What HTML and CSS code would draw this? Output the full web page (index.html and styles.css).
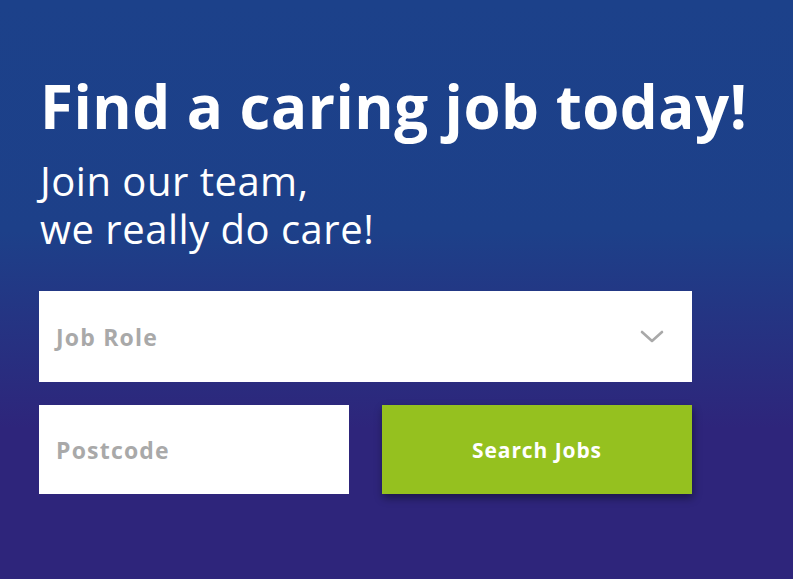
FILE: index.html
```html
<!DOCTYPE html>
<html lang="en">
<head>
<meta charset="utf-8">
<title>Find a caring job today!</title>
<link rel="stylesheet" href="styles.css">
</head>
<body>
<main class="hero">
  <h1 class="hero-title">Find a caring job today!</h1>
  <p class="hero-sub">Join our team,<br>we really do care!</p>
  <form class="search">
    <div class="field field-select">
      <span class="field-label">Job Role</span>
      <svg class="chevron" width="24" height="14" viewBox="0 0 24 14" aria-hidden="true">
        <path d="M2 2 L12 11 L22 2" fill="none" stroke="#a9a9a9" stroke-width="2.6" stroke-linecap="round" stroke-linejoin="round"/>
      </svg>
    </div>
    <div class="search-row">
      <input class="field field-input" type="text" placeholder="Postcode">
      <button class="btn" type="button">Search Jobs</button>
    </div>
  </form>
</main>
</body>
</html>
```

FILE: styles.css
```css
* {
  box-sizing: border-box;
}

html, body {
  margin: 0;
  height: 100%;
}

body {
  background: linear-gradient(180deg, #1c418a 0%, #1d4089 40%, #2e257b 74%, #2e257b 100%);
  font-family: "Open Sans", "Liberation Sans", sans-serif;
  color: #ffffff;
  overflow: hidden;
}

.hero {
  padding: 70px 0 0 40px;
}

.hero-title {
  margin: 0;
  font-size: 60px;
  line-height: 72px;
  font-weight: 700;
  letter-spacing: 0.5px;
}

.hero-sub {
  margin: 15px 0 0;
  font-size: 40px;
  line-height: 48px;
  font-weight: 400;
  letter-spacing: 0.5px;
}

.search {
  margin-top: 38px;
  width: 653px;
  margin-left: -1px;
  display: flex;
  flex-direction: column;
  gap: 23px;
}

.field {
  background: #ffffff;
  border: none;
  font-family: "Open Sans", "Liberation Sans", sans-serif;
  font-size: 23px;
  font-weight: 700;
  letter-spacing: 1.2px;
  color: #a9a9a9;
}

.field-select {
  height: 91px;
  display: flex;
  align-items: center;
  justify-content: space-between;
  padding: 0 28px 0 17px;
}

.chevron {
  display: block;
}

.search-row {
  display: flex;
  gap: 33px;
}

.field-input {
  width: 310px;
  height: 89px;
  padding: 0 17px;
  outline: none;
}

.field-input::placeholder {
  color: #a9a9a9;
  opacity: 1;
}

.btn {
  width: 310px;
  height: 89px;
  border: none;
  background: #95c11f;
  color: #ffffff;
  font-family: "Open Sans", "Liberation Sans", sans-serif;
  font-size: 21px;
  font-weight: 700;
  letter-spacing: 0.9px;
  box-shadow: 1px 4px 8px rgba(0, 0, 0, 0.4);
  cursor: pointer;
}
```
